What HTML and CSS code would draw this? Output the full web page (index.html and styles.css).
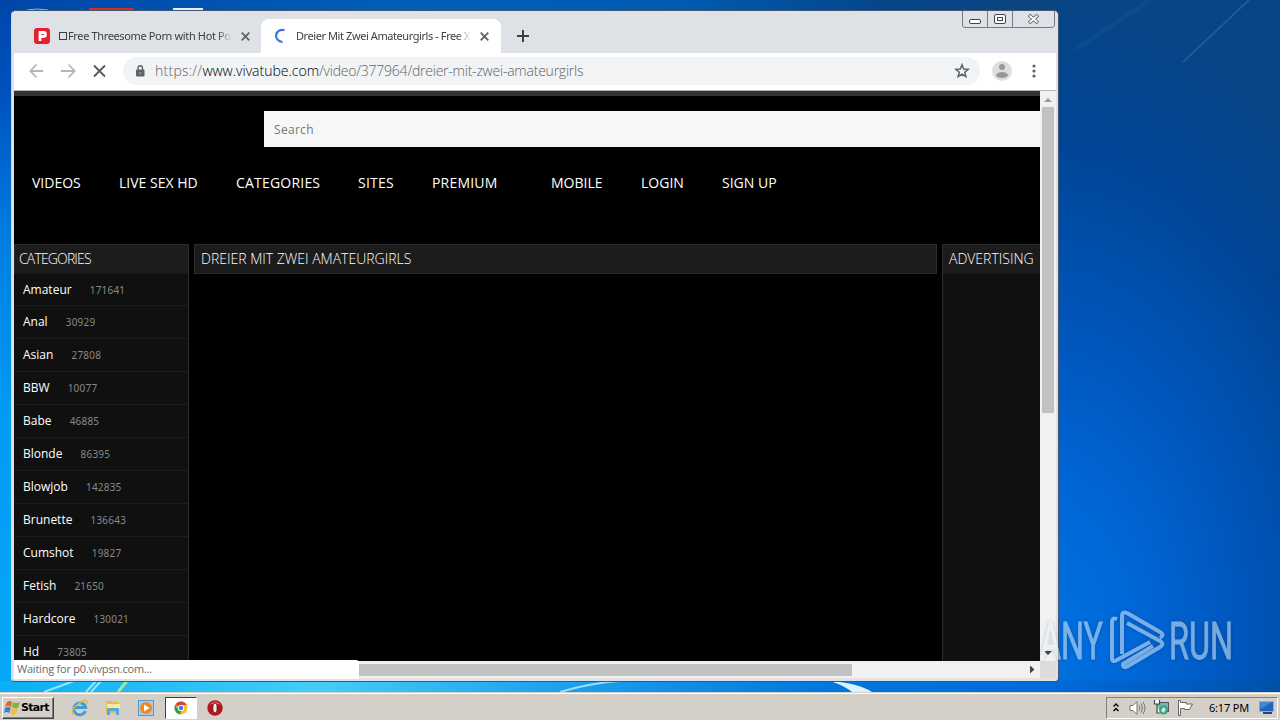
FILE: index.html
```
<!DOCTYPE html>
<html lang="en">
<head>
    <meta charset="UTF-8">
    <meta name="viewport" content="width=device-width, initial-scale=1.0">
    <title>Desktop</title>
    <link rel="stylesheet" href="styles.css">
</head>
<body>
    <div class="desktop">
        <!-- Wallpaper -->
        <svg class="wallpaper" viewBox="0 0 1280 692" preserveAspectRatio="none">
            <defs>
                <linearGradient id="left" x1="0" y1="0" x2="0" y2="1">
                    <stop offset="0" stop-color="#0046aa"/>
                    <stop offset=".13" stop-color="#0051bd"/>
                    <stop offset=".35" stop-color="#007fe0"/>
                    <stop offset=".6" stop-color="#009cf4"/>
                    <stop offset="1" stop-color="#06a8f6"/>
                </linearGradient>
                <radialGradient id="right" gradientUnits="userSpaceOnUse" cx="0" cy="0" r="1" gradientTransform="translate(1040 640) scale(420 640)">
                    <stop offset="0" stop-color="#0072e2"/>
                    <stop offset=".25" stop-color="#0066d6"/>
                    <stop offset=".5" stop-color="#0055b9"/>
                    <stop offset=".8" stop-color="#004494"/>
                    <stop offset="1" stop-color="#074585"/>
                </radialGradient>
                <linearGradient id="top" x1="0" y1="0" x2="1" y2="0">
                    <stop offset="0" stop-color="#0046aa"/>
                    <stop offset=".4" stop-color="#005fba"/>
                    <stop offset=".65" stop-color="#005bb0"/>
                    <stop offset=".85" stop-color="#064488"/>
                    <stop offset="1" stop-color="#0d4480"/>
                </linearGradient>
                <linearGradient id="bottom" x1="0" y1="0" x2="1" y2="0">
                    <stop offset="0" stop-color="#08b0f4"/>
                    <stop offset=".25" stop-color="#45cdf8"/>
                    <stop offset=".42" stop-color="#20a4ee"/>
                    <stop offset=".65" stop-color="#0077dc"/>
                    <stop offset=".82" stop-color="#006bdb"/>
                    <stop offset="1" stop-color="#0050a8"/>
                </linearGradient>
            </defs>
            <rect width="600" height="692" fill="url(#left)"/>
            <rect x="600" width="680" height="692" fill="url(#right)"/>
            <rect width="1050" height="11" fill="url(#top)"/>
            <rect y="681" width="1280" height="11" fill="url(#bottom)"/>
            <path d="M1183 62L1249 0" stroke="#5c94c8" stroke-width="1.500" opacity=".35"/>
            <path d="M1075 50L1150 0" stroke="#2a70b0" stroke-width="5" opacity=".15"/>
            <path d="M44 692L74 681M86 692L96 681M91 692L101 681M560 692Q590 683 620 681" fill="none" stroke="#b9efff" stroke-width="2" opacity=".8"/>
            <path d="M118 692L127 681" stroke="#a0e6a0" stroke-width="3"/>
            <path d="M830 681Q858 683 872 692H852Q845 686 830 681" fill="#d9f3ff"/>
            <path d="M27 10Q37 8 48 10" fill="none" stroke="#95b6d8"/>
            <path d="M89 9.500H134" stroke="#d43022" stroke-width="3"/>
            <path d="M173 9.500H203" stroke="#e4edf5" stroke-width="3"/>
        </svg>

        <!-- Browser window -->
        <div class="window">
            <div class="tabstrip">
                <div class="tab">
                    <svg class="favicon" width="16" height="16" viewBox="0 0 16 16">
                        <rect width="16" height="16" rx="3" fill="#e8202e"/>
                        <path d="M6 13V4.500H9.500A2 2 0 0 1 9.500 8.500H6" fill="none" stroke="#fff" stroke-width="2.800"/>
                    </svg>
                    <span class="tab-title first"><i></i>Free Threesome Porn with Hot Por</span>
                    <svg class="tab-close" width="9" height="9" viewBox="0 0 9 9"><path d="M.7.700L8.300 8.300M8.300.700L.7 8.300"/></svg>
                </div>
                <div class="tab active">
                    <svg class="favicon" width="16" height="16" viewBox="0 0 16 16">
                        <path d="M11.500 2.300A6 6 0 1 0 9.500 13.800" fill="none" stroke="#3478e0" stroke-width="2.200"/>
                    </svg>
                    <span class="tab-title">Dreier Mit Zwei Amateurgirls - Free X</span>
                    <svg class="tab-close" width="9" height="9" viewBox="0 0 9 9"><path d="M.7.700L8.300 8.300M8.300.700L.7 8.300"/></svg>
                </div>
                <svg class="new-tab" width="12" height="12" viewBox="0 0 12 12"><path d="M6 0V12M0 6H12" stroke="#3c4043" stroke-width="2"/></svg>
                <svg class="controls" width="94" height="18" viewBox="0 0 94 18" fill="none" stroke="#777a83">
                    <path d="M.5 0V14Q.5 16.500 3 16.500H89Q92.500 16.500 92.500 14V0M25.500 0V16M50.500 0V16"/>
                    <rect x="7.500" y="8.500" width="11" height="4" rx="1.500" fill="#fff" stroke="#40424e"/>
                    <rect x="32.500" y="3.500" width="11" height="9" rx="1.500" fill="#fff" stroke="#40424e"/>
                    <rect x="35.500" y="6.500" width="5" height="3" stroke="#40424e"/>
                    <path d="M67 4L76 12M76 4L67 12" stroke="#555762" stroke-width="3.600"/>
                    <path d="M67.500 4.500L75.500 11.500M75.500 4.500L67.500 11.500" stroke="#fff" stroke-width="1.800"/>
                </svg>
            </div>

            <div class="toolbar">
                <svg class="nav-icons" width="78" height="16" viewBox="0 0 78 16" fill="none" stroke="#b4b6b9" stroke-width="1.800">
                    <path d="M14 8H1.500M7.500 1.500L1.300 8L7.500 14.500"/>
                    <path d="M32 8H45.500M39.500 1.500L45.700 8L39.500 14.500"/>
                    <path d="M65 2.500L76 13.500M76 2.500L65 13.500" stroke="#55585c" stroke-width="1.800"/>
                </svg>
                <div class="omnibox">
                    <svg width="10" height="12" viewBox="0 0 10 12">
                        <rect x="1" y="4.500" width="8.500" height="7" rx="1" fill="#5f6368"/>
                        <path d="M3 5V3A2.200 2.200 0 0 1 7.500 3V5" fill="none" stroke="#5f6368" stroke-width="1.400"/>
                        <circle cx="5.200" cy="8" r=".9" fill="#aaa"/>
                    </svg>
                    <span class="url"><span class="scheme">https://</span><b>www.vivatube.com</b><span class="path">/video/377964/dreier-mit-zwei-amateurgirls</span></span>
                    <svg class="star" width="16" height="16" viewBox="0 0 16 16"><path d="M8 1.700L9.700 6L14.200 6.300L10.700 9.200L11.900 13.700L8 11.200L4.100 13.700L5.300 9.200L1.800 6.300L6.300 6Z" fill="none" stroke="#5f6368" stroke-width="1.500"/></svg>
                </div>
                <svg class="avatar" width="20" height="20" viewBox="0 0 20 20">
                    <circle cx="10" cy="10" r="10" fill="#dedede"/>
                    <circle cx="10" cy="6" r="3" fill="#989898"/>
                    <ellipse cx="10" cy="14" rx="6" ry="3" fill="#989898"/>
                </svg>
                <svg class="dots" width="4" height="14" viewBox="0 0 4 14" fill="#5f6368"><circle cx="2" cy="2" r="1.600"/><circle cx="2" cy="7" r="1.600"/><circle cx="2" cy="12" r="1.600"/></svg>
            </div>

            <div class="viewport">
                <div class="page">
                    <div class="search">Search</div>
                    <div class="menu">
                        <span class="m1">VIDEOS</span>
                        <span class="m2">LIVE SEX HD</span>
                        <span class="m3">CATEGORIES</span>
                        <span class="m4">SITES</span>
                        <span class="m5">PREMIUM</span>
                        <span class="m6">MOBILE</span>
                        <span class="m7">LOGIN</span>
                        <span>SIGN UP</span>
                    </div>
                    <div class="columns">
                        <div class="sidebar">
                            <h3>CATEGORIES</h3>
                            <ul>
                                <li>Amateur <i>171641</i></li>
                                <li>Anal <i>30929</i></li>
                                <li>Asian <i>27808</i></li>
                                <li>BBW <i>10077</i></li>
                                <li>Babe <i>46885</i></li>
                                <li>Blonde <i>86395</i></li>
                                <li>Blowjob <i>142835</i></li>
                                <li>Brunette <i>136643</i></li>
                                <li>Cumshot <i>19827</i></li>
                                <li>Fetish <i>21650</i></li>
                                <li>Hardcore <i>130021</i></li>
                                <li>Hd <i>73805</i></li>
                            </ul>
                        </div>
                        <div class="video"><h3>DREIER MIT ZWEI AMATEURGIRLS</h3></div>
                        <div class="ads"><h3>ADVERTISING</h3></div>
                    </div>
                </div>
                <div class="vscroll">
                    <svg width="16" height="16" viewBox="0 0 16 16"><path d="M4 11L8 7L12 11Z" fill="#999"/></svg>
                    <div class="vthumb"></div>
                    <svg width="16" height="16" viewBox="0 0 16 16"><path d="M4 6L8 10L12 6Z" fill="#444"/></svg>
                </div>
            </div>

            <div class="hscroll">
                <div class="hthumb"></div>
                <svg width="16" height="17" viewBox="0 0 16 17"><path d="M6 4.500L10.500 8.500L6 12.500Z" fill="#444"/></svg>
                <div class="corner"></div>
            </div>
            <div class="status">Waiting for p0.vivpsn.com...</div>
        </div>

        <!-- Watermark -->
        <svg class="watermark" width="200" height="70" viewBox="0 0 200 70">
            <text x="1" y="54" textLength="63" lengthAdjust="spacingAndGlyphs">ANY</text>
            <text x="130" y="54" textLength="64" lengthAdjust="spacingAndGlyphs">RUN</text>
            <path d="M83 49V11Q83 6 88 8L121 27Q126 30 121 33M88 18L121 36Q126 39 121 42L89 61Q84 64 84 59L114 41M78 14Q73 12 73 17V53Q73 58 78 55L111 37"/>
        </svg>
    </div>

    <!-- Taskbar -->
    <div class="taskbar">
        <div class="start">
            <svg width="17" height="16" viewBox="0 0 17 16">
                <path d="M3 2Q6 0 8 2L7 7Q4 5 1 7Z" fill="#e8622a"/>
                <path d="M9 2Q12 4 16 2L14 8Q11 9 8 7Z" fill="#7db83a"/>
                <path d="M1 8Q4 6 7 8L5 13Q3 11 0 13Z" fill="#3c80d0"/>
                <path d="M8 8Q11 10 14 9L12 14Q8 16 6 13Z" fill="#f5bd32"/>
            </svg>
            <span>Start</span>
        </div>
        <div class="launch">
            <svg width="18" height="18" viewBox="0 0 18 18" fill="none">
                <path d="M14.500 12A6 6 0 1 1 14.700 8.500H4" stroke="#3a9ce0" stroke-width="2.800"/>
                <path d="M2 16Q-1 12 6 6T16 2Q17 3 15 6" stroke="#e5b83c" stroke-width="1.300"/>
            </svg>
            <svg width="18" height="18" viewBox="0 0 18 18">
                <path d="M2 2H8L9 3H15V14H2Z" fill="#e0bd55"/>
                <path d="M3 5H16V10H3Z" fill="#f8e9a4"/>
                <path d="M3 16V10Q3 9 4 9H14Q15 9 15 10V16H12V12H6V16Z" fill="#55a9dc"/>
            </svg>
            <svg width="18" height="18" viewBox="0 0 18 18">
                <rect x="1.500" y="1.500" width="15" height="15" fill="#a7cdec" stroke="#5c97cb"/>
                <circle cx="9" cy="9" r="6" fill="#f08a1c"/>
                <path d="M7 5.500L12.500 9L7 12.500Z" fill="#fff"/>
            </svg>
            <div class="running">
                <svg width="14" height="14" viewBox="0 0 14 14">
                    <circle cx="7" cy="7" r="6.500" fill="#f4c430"/>
                    <path d="M7 7L1.400 3.700A6.500 6.500 0 0 1 12.700 4H7Z" fill="#dc4437"/>
                    <path d="M1.400 3.700L5 10L7.500 9.500L6 13.500A6.500 6.500 0 0 1 1.400 3.700Z" fill="#2c9f58"/>
                    <circle cx="7" cy="7" r="3.100" fill="#fff"/>
                    <circle cx="7" cy="7" r="2.300" fill="#3f7de0"/>
                </svg>
            </div>
            <svg width="16" height="16" viewBox="0 0 16 16">
                <circle cx="8" cy="8" r="7.700" fill="#b3161b"/>
                <path d="M2 5Q8-2 14 5Q8 2 2 5" fill="#e2615e"/>
                <ellipse cx="8" cy="8" rx="2.200" ry="5" fill="#eee" stroke="#721014"/>
            </svg>
        </div>
        <div class="tray">
            <svg class="chevrons" width="8" height="11" viewBox="0 0 8 11"><path d="M1.500 4.500L4 2L6.500 4.500M1.500 9L4 6.500L6.500 9" fill="none" stroke="#000" stroke-width="1.400"/></svg>
            <svg class="volume" width="17" height="16" viewBox="0 0 17 16" fill="none" stroke="#777">
                <path d="M1 5.500H4L8 1.500V14.500L4 10.500H1Z" fill="#fff"/>
                <path d="M10 5.500Q12 8 10 10.500M12 3.500Q15 8 12 12.500M14 2Q18 8 14 14"/>
            </svg>
            <svg class="network" width="17" height="17" viewBox="0 0 17 17">
                <rect x="4.500" y="3.500" width="11" height="9" fill="#78b6b4" stroke="#556"/>
                <circle cx="10.500" cy="11" r="4.500" fill="#32a37e"/>
                <path d="M8 12L10 8L13 10L11 14" fill="#c9eedb"/>
                <path d="M1.500 1V5H6.500V1M4 5V14H7" fill="#fff" stroke="#444" stroke-width="1.200"/>
            </svg>
            <svg class="flag" width="17" height="16" viewBox="0 0 17 16"><path d="M1.500 15.500V.500H3.500V2.500H9V4H15.500L12.500 9.500H7.500V8.500H3.500V15.500Z" fill="#fff" stroke="#666"/></svg>
            <span class="clock">6:17 PM</span>
            <svg class="show" width="15" height="13" viewBox="0 0 15 13"><rect x=".5" y=".5" width="14" height="10" fill="#2465bb" stroke="#8cb0dc"/><path d="M1 1H13L2 8Z" fill="#4386d6"/><path d="M4 12H13" stroke="#27477c" stroke-width="2"/></svg>
        </div>
    </div>
</body>
</html>
```
FILE: styles.css
```
* {
    margin: 0;
    padding: 0;
    box-sizing: border-box;
}

body {
    width: 1280px;
    height: 720px;
    overflow: hidden;
    display: flex;
    flex-direction: column;
    font-family: "Open Sans", "Noto Sans", sans-serif;
}

svg {
    display: block;
    flex: none;
}

.desktop {
    position: relative;
    height: 692px;
    overflow: hidden;
}

.wallpaper {
    width: 1280px;
    height: 692px;
}

/* Window */
.window {
    position: absolute;
    left: 11px;
    top: 10px;
    width: 1048px;
    height: 672px;
    padding: 0 2px 3px;
    display: flex;
    flex-direction: column;
    background: #dfe1e7;
    border: 1px solid #42566e;
    border-left-color: #c9d9ea;
    border-top-color: #42566e;
    border-radius: 5px 5px 4px 4px;
    overflow: hidden;
}

.tabstrip {
    display: flex;
    height: 42px;
    padding: 8px 0 0 8px;
    background: #dee1e6;
}

.tab {
    display: flex;
    align-items: center;
    width: 239px;
    height: 34px;
    padding: 0 11px 0 12px;
}

.tab.active {
    width: 240px;
    background: #fff;
    border-radius: 8px 8px 0 0;
}

.tab-title {
    width: 175px;
    height: 17px;
    margin: 0 9px 0 7px;
    white-space: nowrap;
    font-family: "Noto Sans", sans-serif;
    font-size: 11px;
    line-height: 15px;
    letter-spacing: -.42px;
    color: #3c4043;
    -webkit-mask-image: linear-gradient(90deg, #000 92%, transparent);
    mask-image: linear-gradient(90deg, #000 92%, transparent);
}

/* missing glyph box at the start of the title */
.first i {
    display: inline-block;
    width: 8px;
    height: 8px;
    margin: 0 1px 0 2px;
    border: 1px solid #3c4043;
}

.first {
    letter-spacing: -.36px;
}

.tab-close {
    stroke: #5f6368;
    stroke-width: 1.8;
}

.new-tab {
    margin: 11px 0 0 16px;
}

.controls {
    margin: -8px 0 0 auto;
}

.toolbar {
    display: flex;
    align-items: center;
    height: 38px;
    padding: 0 20px 2px 15px;
    background: #fff;
    border-bottom: 1px solid #b4b6b8;
}

.omnibox {
    display: flex;
    align-items: center;
    width: 857px;
    height: 28px;
    margin: 0 12px 0 16px;
    padding: 0 10px 0 12px;
    border-radius: 14px;
    background: #f1f3f4;
}

.url {
    margin-left: 10px;
    font-size: 14px;
    font-weight: 300;
    color: #5f6368;
    white-space: nowrap;
}

.url b {
    font-weight: 300;
    color: #000;
}

.scheme {
    letter-spacing: .25px;
}

.path {
    letter-spacing: -.23px;
}

.star {
    margin-left: auto;
}

.dots {
    margin-left: auto;
}

/* Web page */
.viewport {
    display: flex;
    height: 570px;
}

.page {
    width: 1026px;
    overflow: hidden;
    background: #000;
    border-top: 5px solid #333;
    color: #fff;
}

.search {
    height: 36px;
    margin: 15px 0 0 250px;
    padding-left: 10px;
    background: #f7f7f7;
    color: #777;
    font-size: 12px;
    line-height: 37px;
    letter-spacing: .3px;
}

.menu {
    display: flex;
    height: 97px;
    padding: 26px 0 0 18px;
    font-size: 14px;
    line-height: 20px;
    white-space: nowrap;
}

.m1 { width: 87px; }
.m2 { width: 117px; }
.m3 { width: 122px; letter-spacing: .2px; }
.m4 { width: 74px; letter-spacing: .2px; }
.m5 { width: 119px; letter-spacing: .2px; }
.m6 { width: 90px; }
.m7 { width: 81px; }

.columns {
    display: flex;
    gap: 5px;
    height: 420px;
}

h3 {
    height: 30px;
    padding-left: 6px;
    background: #1c1c1c;
    border: 1px solid #2b2b2b;
    font-size: 14px;
    font-weight: 300;
    line-height: 28px;
    white-space: nowrap;
}

.sidebar {
    width: 175px;
    flex: none;
    background: #101010;
    border-right: 1px solid #2b2b2b;
}

.sidebar h3 {
    padding-left: 4px;
    border-right: 0;
    border-bottom-color: #151515;
    letter-spacing: -.85px;
}

.sidebar li {
    height: 33px;
    padding-left: 9px;
    list-style: none;
    border-bottom: 1px solid #1c1c1c;
    font-size: 12px;
    line-height: 31px;
}

.sidebar li:first-child {
    height: 32px;
}

.sidebar i {
    margin-left: 15px;
    font-family: "Noto Sans", sans-serif;
    font-size: 10px;
    font-style: normal;
    letter-spacing: .2px;
    color: #888;
}

.video {
    width: 743px;
    flex: none;
}

.ads {
    width: 120px;
    flex: none;
    background: #111;
    border-left: 1px solid #2b2b2b;
}

.ads h3 {
    border-left: 0;
    border-bottom-color: #151515;
}

/* Scrollbars */
.vscroll {
    width: 16px;
    background: #f1f1f1;
    display: flex;
    flex-direction: column;
}

.vthumb {
    width: 12px;
    height: 306px;
    margin: 0 2px auto;
    background: #c1c1c1;
}

.hscroll {
    display: flex;
    height: 17px;
    background: #f1f1f1;
}

.hthumb {
    width: 493px;
    height: 12px;
    margin: 3px auto 0 345px;
    background: #c1c1c1;
}

.corner {
    width: 16px;
    background: #dcdcdc;
}

.status {
    position: absolute;
    left: 2px;
    bottom: 2px;
    width: 345px;
    height: 19px;
    padding-left: 3px;
    background: #fff;
    border-radius: 0 3px 0 0;
    color: #696969;
    font-size: 11px;
    line-height: 18px;
    letter-spacing: -.22px;
}

.watermark {
    position: absolute;
    left: 1039px;
    top: 605px;
    opacity: .52;
    filter: drop-shadow(0 0 2px rgba(0, 0, 0, .35));
}

.watermark text {
    font-family: Roboto, sans-serif;
    font-size: 51px;
    fill: #e8f1fa;
    stroke: #e8f1fa;
    stroke-width: .8;
}

.watermark path {
    fill: none;
    stroke: #e8f1fa;
    stroke-width: 4;
    stroke-linejoin: round;
}

/* Taskbar */
.taskbar {
    display: flex;
    align-items: center;
    height: 28px;
    padding: 2px 2px 0;
    background: #d4d0c8;
    border-top: 1px solid #d4d0c8;
    box-shadow: inset 0 1px #fff;
}

.start {
    display: flex;
    align-items: center;
    width: 52px;
    height: 22px;
    padding-left: 1px;
    border: 1px solid;
    border-color: #fff #404040 #404040 #fff;
    box-shadow: inset -1px -1px #808080;
    font-family: "DejaVu Sans", sans-serif;
    font-size: 11px;
    font-weight: bold;
    letter-spacing: -.7px;
}

.launch {
    display: flex;
    align-items: center;
    gap: 15px;
    margin-left: 17px;
}

.running {
    display: flex;
    align-items: center;
    justify-content: center;
    width: 32px;
    height: 22px;
    margin: 0 -5px;
    background: #fff;
    border: 1px solid;
    border-color: #404040 #fff #fff #404040;
}

.tray {
    display: flex;
    align-items: center;
    width: 172px;
    height: 22px;
    margin-left: auto;
    padding-left: 5px;
    border: 1px solid;
    border-color: #808080 #fff #fff #808080;
}

.volume { margin-left: 9px; }
.network { margin-left: 7px; }
.flag { margin-left: 7px; }

.clock {
    width: 41px;
    margin: 0 9px 0 15px;
    font-family: "Noto Sans", sans-serif;
    font-size: 11px;
    letter-spacing: -.2px;
    white-space: nowrap;
}
```
